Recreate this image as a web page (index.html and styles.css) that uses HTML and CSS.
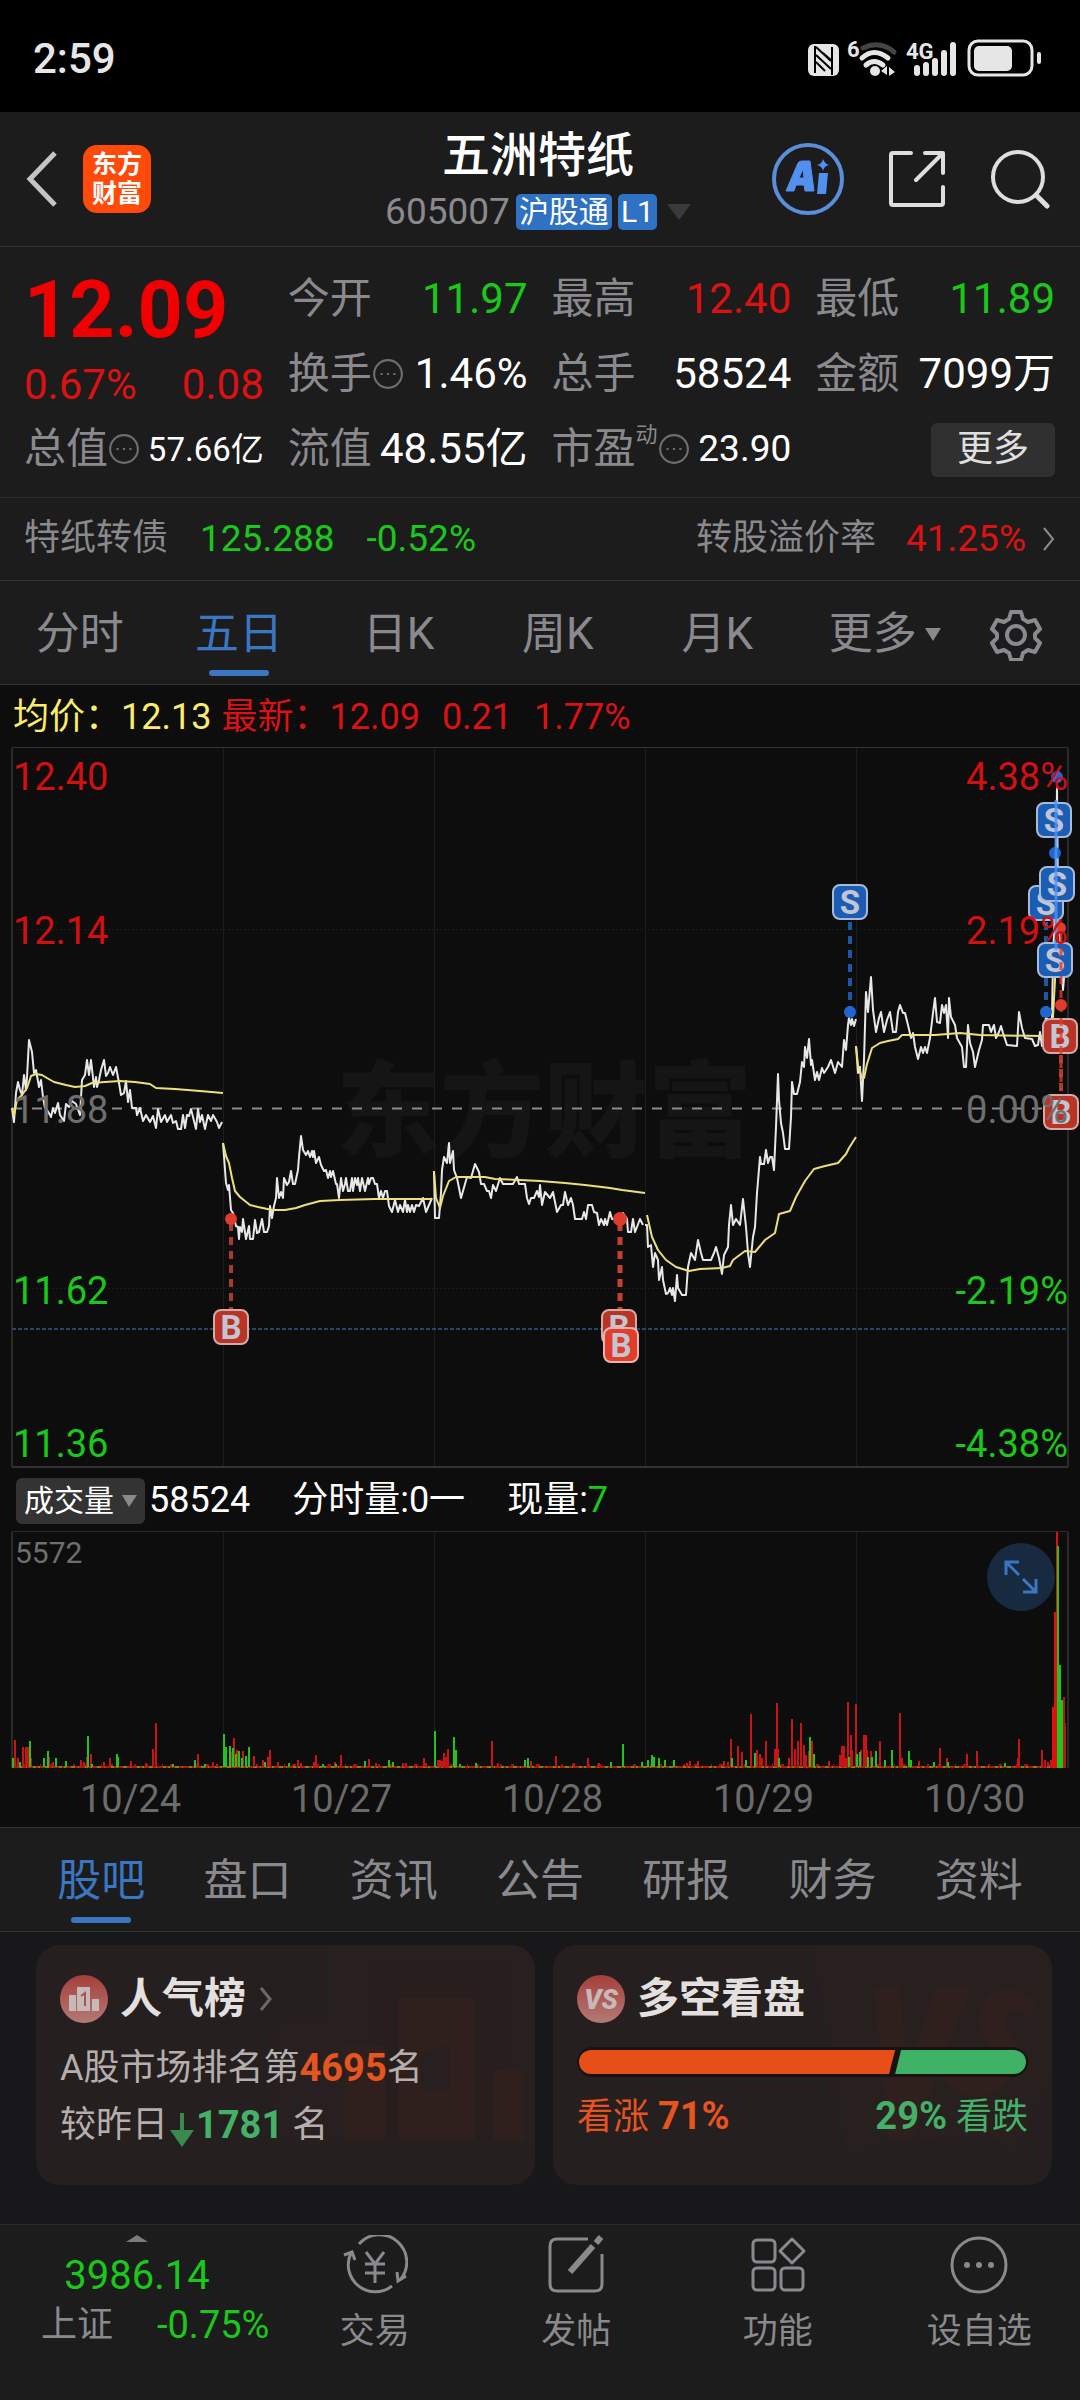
FILE: index.html
```html
<!DOCTYPE html>
<html lang="zh-CN">
<head>
<meta charset="utf-8">
<meta name="viewport" content="width=device-width, initial-scale=1">
<title>五洲特纸 605007</title>
<link rel="stylesheet" href="styles.css">
</head>
<body>
<div class="status">
  <span class="clock">2:59</span>
  <svg class="status-icons" width="240" height="46" viewBox="0 0 240 46" aria-hidden="true">
    <rect x="2" y="8" width="31" height="32" rx="6" fill="#e6e6e6"/>
    <path d="M9 10v27M26 11v28" stroke="#000" stroke-width="2"/>
    <path d="M10 11l15 14M10 19l15 14M17 17l9 8M10 26l9 9" stroke="#000" stroke-width="2"/>
    <text x="41" y="21" class="st-text">6</text>
    <path d="M57 12q17-8 31 4" fill="none" stroke="#444" stroke-width="5" stroke-linecap="round"/>
    <path d="M56 22q12-11 26 0M60 29q8-7 17 0" fill="none" stroke="#e6e6e6" stroke-width="5" stroke-linecap="round"/>
    <circle cx="69" cy="35" r="5" fill="#e6e6e6"/>
    <path d="M75 35l6-5v9zM89 36l-6-5v9z" fill="#e6e6e6"/>
    <text x="100" y="23" class="st-text">4G</text>
    <path d="M111 32v5M120 29v8M129 25v12M138 17v20M147 9v28" stroke="#e6e6e6" stroke-width="6" stroke-linecap="round"/>
    <rect x="163" y="5" width="63" height="34" rx="9" fill="none" stroke="#e6e6e6" stroke-width="3"/>
    <rect x="168" y="10" width="38" height="25" rx="5" fill="#e6e6e6"/>
    <path d="M233 18v8" stroke="#e6e6e6" stroke-width="4" stroke-linecap="round"/>
  </svg>
</div>

<header class="topbar">
  <div class="top-left">
    <button class="icon-btn" aria-label="返回"><svg width="32" height="58" viewBox="0 0 32 58"><path d="M29 3L4 29l25 26" fill="none" stroke="#c4c4c4" stroke-width="5"/></svg></button>
    <a class="logo" href="#">东方<br>财富</a>
  </div>
  <div class="top-mid">
    <h1>五洲特纸</h1>
    <div class="code"><span>605007</span><span class="tag">沪股通</span><span class="tag">L1</span><svg width="24" height="16" viewBox="0 0 24 16"><path d="M0 0h24L12 16z" fill="#3a3a3a"/></svg></div>
  </div>
  <div class="top-right">
    <button class="icon-btn" aria-label="AI"><svg width="72" height="72" viewBox="0 0 72 72"><circle cx="36" cy="36" r="34" fill="none" stroke="#5a8edb" stroke-width="4"/><path d="M14 48l12-28q1-2 4-2h8l4 30h-9l-1-6h-8l-2 6zM27 35h5l-1-9z" fill="#5290f0" stroke="#5290f0" stroke-width="1" stroke-linejoin="round"/><path d="M47 30h9l-2 21h-9z" fill="#5290f0"/><path d="M51 16q2 5 6 6-5 1-6 6-1-5-6-6 5-1 6-6z" fill="#5290f0"/></svg></button>
    <button class="icon-btn" aria-label="分享"><svg width="58" height="58" viewBox="0 0 58 58"><path d="M23 3H5Q3 3 3 5v48q0 2 2 2h48q2 0 2-2V37M37 3h18v20M54 4L28 30" fill="none" stroke="#dedede" stroke-width="4" stroke-linecap="round" stroke-linejoin="round"/></svg></button>
    <button class="icon-btn" aria-label="搜索"><svg width="60" height="60" viewBox="0 0 60 60"><circle cx="28" cy="28" r="25" fill="none" stroke="#dedede" stroke-width="4"/><path d="M46 46l11 11" stroke="#dedede" stroke-width="5" stroke-linecap="round"/></svg></button>
  </div>
</header>

<section class="quote">
  <div class="price">
    <strong>12.09</strong>
    <div class="pair red"><span>0.67%</span><span>0.08</span></div>
  </div>
  <div class="cell"><span class="lbl">今开</span><span class="val green">11.97</span></div>
  <div class="cell"><span class="lbl">最高</span><span class="val red">12.40</span></div>
  <div class="cell"><span class="lbl">最低</span><span class="val green">11.89</span></div>
  <div class="cell"><span class="lbl">换手<svg class="dots" viewBox="0 0 30 30"><circle cx="15" cy="15" r="13"/><path d="M8 15h2M14 15h2M20 15h2"/></svg></span><span class="val">1.46%</span></div>
  <div class="cell"><span class="lbl">总手</span><span class="val">58524</span></div>
  <div class="cell"><span class="lbl">金额</span><span class="val">7099万</span></div>
  <div class="cell"><span class="lbl">总值<svg class="dots" viewBox="0 0 30 30"><circle cx="15" cy="15" r="13"/><path d="M8 15h2M14 15h2M20 15h2"/></svg></span><span class="val xs">57.66亿</span></div>
  <div class="cell"><span class="lbl">流值</span><span class="val">48.55亿</span></div>
  <div class="cell"><span class="lbl">市盈<sup>动</sup><svg class="dots" viewBox="0 0 30 30"><circle cx="15" cy="15" r="13"/><path d="M8 15h2M14 15h2M20 15h2"/></svg></span><span class="val sm">23.90</span></div>
  <div class="cell end"><button class="more">更多</button></div>
</section>

<a class="bond" href="#">
  <span class="grey">特纸转债</span><span class="green b1">125.288</span><span class="green b2">-0.52%</span>
  <span class="grey push">转股溢价率</span><span class="red b3">41.25%</span>
  <svg width="14" height="26" viewBox="0 0 14 26"><path d="M2 2l9 11-9 11" fill="none" stroke="#8a8a8e" stroke-width="2"/></svg>
</a>

<nav class="periods">
  <button>分时</button><button class="on">五日</button><button>日K</button><button>周K</button><button>月K</button>
  <button class="drop">更多<svg width="16" height="13" viewBox="0 0 16 13"><path d="M0 0h16L8 13z" fill="#8a8a8e"/></svg></button>
  <button aria-label="设置"><svg width="52" height="52" viewBox="0 0 52 52" fill="none" stroke="#8a8a8e" stroke-width="4" stroke-linejoin="round"><path d="M21 3h10l2 7 5 3 7-2 5 9-5 5v4l5 5-5 9-7-2-5 3-2 7H21l-2-7-5-3-7 2-5-9 5-5v-4l-5-5 5-9 7 2 5-3z"/><circle cx="26" cy="26" r="9"/></svg></button>
</nav>

<main class="charts">
  <p class="legend"><span class="yellow">均价：</span><span class="yellow">12.13</span><span class="red l2">最新：</span><span class="red">12.09</span><span class="red l4">0.21</span><span class="red l4">1.77%</span></p>

  <svg class="plot" viewBox="0 747 1080 721" role="img" aria-label="五日分时走势">
    <defs>
      <g id="buy"><rect x="-17" y="-17" width="34" height="34" rx="7" fill="#b83426" stroke="#d3aaa6" stroke-width="2"/><text y="12" class="mark">B</text></g>
      <g id="sell"><rect x="-17" y="-17" width="34" height="34" rx="7" fill="#1b5cb5" stroke="#a9bbd6" stroke-width="2"/><text y="12" class="mark">S</text></g>
    </defs>
    <text x="336" y="1149" class="brand">东方财富</text>
    <g fill="none" stroke="#1d1d1d" stroke-width="1"><path d="M223.500 748V1467M434.500 748V1467M645.500 748V1467M856.500 748V1467"/><path d="M12 929.500H1068M12 1288.500H1068" stroke-dasharray="2 2"/></g>
    <path d="M12 1467V748M1068 748V1467" stroke="#2a2a2a" stroke-width="2"/>
    <path d="M12 747.500H1068" stroke="#333"/>
    <path d="M12 1467H1068" stroke="#333" stroke-width="2"/>
    <path d="M12 1108.500H1068" stroke="#8c8c8c" stroke-width="2" stroke-dasharray="10 10"/>
    <path d="M12 1329H1068" stroke="#2a4562" stroke-width="2" stroke-dasharray="4 2"/>
    <g fill="none" stroke="#e8e8e8" stroke-width="2" stroke-linejoin="round">
      <path d="M12 1108L14 1122 16 1093 18 1082 20 1090 22 1095 24 1075 26 1090 27 1077 29 1040 32 1052 34 1073 36 1070 39 1087 41 1080 43 1097 45 1108 47 1110 50 1115 51 1117 53 1108 55 1113 58 1103 60 1115 64 1121 66 1104 69 1107 72 1101 76 1104 80 1115 82 1080 85 1075 87 1060 89 1075 91 1060 94 1087 96 1077 97 1087 99 1080 101 1070 104 1060 106 1076 108 1073 110 1067 113 1075 116 1067 119 1083 121 1095 124 1093 126 1081 128 1102 130 1090 132 1108 136 1108 137 1115 140 1108 143 1121 146 1115 150 1122 153 1116 156 1128 158 1109 161 1122 165 1115 167 1122 171 1115 173 1123 176 1121 178 1129 181 1129 183 1115 185 1128 187 1115 189 1116 191 1109 194 1121 196 1129 198 1109 200 1122 202 1115 205 1129 208 1115 211 1121 213 1115 217 1122 219 1128 222 1122"/>
      <path d="M223 1143L225 1170 226 1183 228 1190 229 1185 231 1210 233 1213 236 1226 238 1227 239 1239 240 1227 242 1232 243 1219 246 1239 247 1235 249 1226 250 1239 253 1239 255 1220 257 1233 259 1232 262 1219 264 1232 267 1232 269 1226 270 1206 272 1218 274 1206 276 1198 277 1178 279 1198 281 1192 283 1198 284 1178 287 1185 289 1182 291 1171 293 1184 295 1184 298 1170 299 1157 301 1136 303 1150 306 1155 308 1151 310 1157 312 1151 313 1157 314 1151 316 1163 319 1157 321 1165 324 1171 326 1170 328 1178 330 1171 331 1177 333 1171 336 1184 337 1184 339 1198 341 1178 343 1191 345 1184 346 1178 348 1191 350 1191 352 1178 353 1191 355 1178 357 1185 358 1178 360 1191 362 1178 365 1191 368 1178 369 1184 371 1178 373 1178 375 1184 377 1184 379 1198 381 1191 383 1198 385 1191 387 1191 389 1206 392 1212 395 1200 398 1212 400 1205 403 1212 405 1200 407 1212 408 1205 410 1212 412 1205 414 1212 416 1205 419 1206 423 1198 426 1212 429 1205 432 1198"/>
      <path d="M434 1171L435 1218 439 1218 441 1193 442 1170 444 1157 447 1163 449 1143 450 1163 453 1151 454 1170 457 1178 461 1198 463 1191 467 1177 471 1178 475 1164 479 1172 481 1184 484 1184 487 1191 489 1191 491 1198 493 1185 496 1191 500 1178 503 1184 513 1184 517 1177 519 1184 525 1184 527 1198 529 1204 531 1198 534 1198 537 1191 539 1197 540 1185 542 1205 545 1192 550 1198 553 1192 557 1212 561 1205 563 1205 565 1192 568 1205 571 1198 573 1205 575 1219 582 1219 584 1212 586 1219 588 1205 592 1205 594 1212 597 1213 599 1225 601 1219 604 1225 605 1219 607 1225 610 1212 612 1219 620 1219 623 1213 627 1219 628 1232 631 1232 633 1219 635 1232 637 1227 640 1219 643 1225"/>
      <path d="M645 1225L647 1225 648 1247 651 1245 653 1267 655 1253 658 1260 659 1280 662 1267 663 1280 666 1294 668 1293 670 1288 672 1295 673 1288 675 1301 677 1275 678 1288 682 1295 686 1295 688 1267 691 1253 695 1260 698 1240 701 1253 703 1260 711 1260 714 1253 716 1247 719 1258 722 1274 724 1255 728 1247 729 1225 731 1205 733 1225 736 1219 740 1225 743 1199 746 1227 748 1253 750 1267 753 1237 755 1227 757 1193 760 1157 761 1164 764 1164 766 1150 768 1163 770 1157 772 1157 774 1170 776 1127 778 1074 779 1100 781 1123 783 1133 785 1149 789 1149 791 1117 792 1082 794 1094 797 1094 800 1082 802 1062 804 1067 805 1047 807 1058 809 1039 811 1065 812 1060 815 1080 817 1072 819 1080 822 1068 824 1073 828 1067 831 1060 835 1073 838 1062 842 1067 844 1040 846 1050 848 1025 849 1018 851 1025 852 1019 854 1026 856 1019"/>
      <path d="M856 1046L858 1073 860 1067 862 1101 864 1060 866 992 868 1012 871 977 873 1010 876 1032 879 1018 881 1012 884 1032 887 1020 890 1012 893 1032 896 1032 898 1012 900 1005 903 1013 905 1013 908 1025 911 1038 913 1033 915 1047 918 1059 921 1047 923 1053 925 1047 927 1053 930 1038 933 1013 935 998 937 1022 940 1023 942 1005 944 1013 946 1005 948 1038 949 998 951 1017 955 1025 957 1038 962 1047 964 1067 966 1067 968 1025 970 1043 973 1052 975 1067 979 1050 982 1040 983 1025 989 1025 991 1032 994 1025 996 1038 999 1032 1001 1026 1003 1033 1007 1045 1017 1046 1019 1012 1022 1028 1025 1038 1032 1039 1035 1046 1038 1045 1040 1032 1042 1046 1046 1017 1050 1025 1052 1017 1053 960 1056 880 1057 787 1058 907 1063 990 1065 967"/>
    </g>
    <g fill="none" stroke="#ede07a" stroke-width="2" stroke-linejoin="round">
      <path d="M12 1108L14 1115 17 1100 22 1095 27 1088 31 1076 36 1074 42 1075 47 1078 54 1082 66 1085 75 1087 85 1086 92 1083 105 1082 120 1081 135 1082 150 1084 156 1088 175 1089 200 1091 223 1093"/>
      <path d="M223 1143L226 1156 229 1163 232 1178 235 1191 240 1197 250 1205 258 1207 272 1210 285 1210 296 1208 305 1205 320 1201 340 1200 375 1199 432 1199"/>
      <path d="M434 1171L436 1198 440 1208 443 1196 449 1181 456 1177 485 1177 495 1179 520 1180 540 1181 565 1183 585 1185 610 1188 622 1190 645 1193"/>
      <path d="M647 1215L652 1237 658 1250 666 1260 676 1267 689 1271 700 1269 722 1268 730 1266 733 1260 745 1251 755 1252 765 1240 775 1233 779 1214 790 1211 796 1197 805 1181 814 1169 825 1166 838 1163 846 1154 849 1148 856 1137"/>
      <path d="M856 1046L858 1065 862 1078 864 1078 867 1064 872 1048 880 1043 888 1041 898 1039 902 1035 935 1035 960 1033 980 1035 1040 1036 1052 1035 1055 980 1057 920"/>
    </g>
    <g fill="none" stroke-dasharray="8 6">
      <path d="M231 1223V1309" stroke="#a83a2e" stroke-width="4"/>
      <path d="M620 1223V1309" stroke="#c8402f" stroke-width="5"/>
      <path d="M850 922V1008M1046 922V1008" stroke="#1f57a5" stroke-width="4"/>
      <path d="M1061 1055V1094" stroke="#a83a2e" stroke-width="4"/>
    </g>
    <g fill="#df3b2a"><circle cx="231" cy="1219" r="6"/><circle cx="620" cy="1219" r="7"/><circle cx="1060" cy="928" r="6"/><circle cx="1061" cy="1005" r="6"/></g>
    <g fill="#1f66d0"><circle cx="850" cy="1012" r="6"/><circle cx="1046" cy="1012" r="6"/><circle cx="1057" cy="777" r="6"/><circle cx="1055" cy="853" r="6"/></g>
    <use href="#buy" x="231" y="1327"/><use href="#buy" x="619" y="1327"/>
    <g><rect x="604" y="1328" width="34" height="34" rx="7" fill="#e23d2b" stroke="#e9b7b0" stroke-width="2"/><text x="621" y="1357" class="mark">B</text></g>
    <use href="#sell" x="850" y="902"/><use href="#sell" x="1046" y="903"/><use href="#sell" x="1054" y="820"/><use href="#sell" x="1057" y="884"/><use href="#sell" x="1055" y="960"/>
    <use href="#buy" x="1060" y="1036"/><use href="#buy" x="1061" y="1112"/>
    <path d="M1056 800V950" stroke="#4c94ff" stroke-width="3" opacity=".8"/>
    <path d="M1061 934V1090" stroke="#df3b2a" stroke-width="3" stroke-dasharray="8 6" opacity=".8"/>
    <g class="axis">
      <g fill="#d40f0f"><text x="13" y="790">12.40</text><text x="13" y="944">12.14</text><text x="1068" y="790" class="r">4.38%</text><text x="1068" y="944" class="r">2.19%</text></g>
      <g fill="#6e6e6e"><text x="13" y="1123">11.88</text><text x="1068" y="1123" class="r">0.00%</text></g>
      <g fill="#1ac81a"><text x="13" y="1304">11.62</text><text x="13" y="1457">11.36</text><text x="1068" y="1304" class="r">-2.19%</text><text x="1068" y="1457" class="r">-4.38%</text></g>
    </g>
  </svg>

  <div class="vol-head">
    <button class="chip">成交量<svg width="15" height="12" viewBox="0 0 15 12"><path d="M0 0h15L7 12z" fill="#8a8a8e"/></svg></button>
    <span>58524</span><span class="v1">分时量:0一</span><span class="v1">现量:<i class="green">7</i></span>
  </div>

  <div class="vol-box">
    <svg class="plot" viewBox="0 1531 1080 239" role="img" aria-label="成交量">
      <path d="M223.500 1532V1768M434.500 1532V1768M645.500 1532V1768M856.500 1532V1768" stroke="#1d1d1d"/>
      <path d="M12 1768V1532M1068 1532V1768" stroke="#2a2a2a" stroke-width="2"/>
      <path d="M12 1531.500H1068" stroke="#2c2c2c"/>
      <text x="15" y="1563" class="max">5572</text>
      <path d="M12 1767H1066" stroke="#c01010" stroke-width="2"/>
      <path d="M12 1767H1052" stroke="#5f8f10" stroke-width="2" stroke-dasharray="2 5 4 3 1 6 3 2"/>
      <path d="M12 1765H1052" stroke="#a81010" stroke-width="2" stroke-dasharray="2 9 3 14 1 7 4 21"/>
      <path fill="none" stroke="#c81414" stroke-width="2" d="M15 1767V1740M18 1767V1758M23 1767V1747M26 1767V1747M28 1767V1747M31 1767V1758M49 1767V1757M53 1767V1762M66 1767V1762M81 1767V1760M84 1767V1762M87 1767V1757M91 1767V1754M104 1767V1762M110 1767V1758M131 1767V1761M146 1767V1763M153 1767V1749M156 1767V1723M198 1767V1754M213 1767V1762M217 1767V1764M231 1767V1752M234 1767V1738M237 1767V1750M243 1767V1751M254 1767V1756M263 1767V1760M268 1767V1757M270 1767V1750M278 1767V1762M298 1767V1760M301 1767V1763M314 1767V1762M316 1767V1755M335 1767V1762M341 1767V1755M369 1767V1759M376 1767V1763M403 1767V1763M406 1767V1763M424 1767V1758M426 1767V1763M438 1767V1760M440 1767V1760M442 1767V1761M444 1767V1753M446 1767V1757M448 1767V1749M492 1767V1741M498 1767V1763M531 1767V1761M556 1767V1756M574 1767V1763M588 1767V1758M599 1767V1763M687 1767V1763M690 1767V1761M698 1767V1761M724 1767V1761M728 1767V1762M731 1767V1739M738 1767V1746M742 1767V1752M751 1767V1714M757 1767V1750M760 1767V1754M762 1767V1758M766 1767V1741M775 1767V1749M777 1767V1703M778 1767V1749M789 1767V1758M792 1767V1719M795 1767V1749M798 1767V1741M801 1767V1723M804 1767V1745M806 1767V1755M809 1767V1751M812 1767V1741M829 1767V1761M840 1767V1755M842 1767V1746M844 1767V1746M846 1767V1758M848 1767V1702M851 1767V1735M852 1767V1750M856 1767V1704M861 1767V1750M864 1767V1735M866 1767V1735M867 1767V1750M871 1767V1751M880 1767V1741M900 1767V1713M902 1767V1758M919 1767V1761M940 1767V1748M947 1767V1758M967 1767V1754M977 1767V1751M1018 1767V1758M1019 1767V1739M1042 1767V1750M1045 1767V1760M1048 1767V1762M1051 1767V1760"/>
      <path fill="none" stroke="#1fc41f" stroke-width="2" d="M13 1767V1758M20 1767V1762M30 1767V1741M44 1767V1758M48 1767V1751M56 1767V1758M66 1767V1761M88 1767V1736M92 1767V1764M117 1767V1754M118 1767V1757M173 1767V1764M195 1767V1760M205 1767V1764M224 1767V1734M226 1767V1747M230 1767V1746M233 1767V1748M236 1767V1754M239 1767V1751M242 1767V1758M246 1767V1756M249 1767V1747M265 1767V1762M289 1767V1763M323 1767V1764M336 1767V1764M365 1767V1761M389 1767V1760M393 1767V1762M435 1767V1731M454 1767V1737M456 1767V1750M460 1767V1764M476 1767V1763M525 1767V1760M528 1767V1758M611 1767V1762M623 1767V1744M642 1767V1762M648 1767V1760M652 1767V1755M654 1767V1757M659 1767V1758M665 1767V1760M674 1767V1760M732 1767V1758M746 1767V1760M755 1767V1753M779 1767V1758M810 1767V1737M814 1767V1754M849 1767V1757M857 1767V1754M860 1767V1752M868 1767V1757M872 1767V1757M876 1767V1751M885 1767V1760M892 1767V1750M909 1767V1751M911 1767V1760M934 1767V1762M948 1767V1762M1005 1767V1763"/>
      <path d="M1052 1768V1707H1054V1612H1056V1532H1058V1768z" fill="#e01010"/>
      <path d="M1057 1768V1546H1059V1665H1061V1700H1063V1768z" fill="#1fc41f"/>
      <path d="M1063 1768V1697H1065V1723H1066V1768z" fill="#b01c10"/>
    </svg>
    <button class="expand" aria-label="放大"><svg width="34" height="34" viewBox="0 0 34 34" fill="none" stroke="#3a76c2" stroke-width="3"><path d="M2 15V2h13M3 3l12 12M32 19v13H19M31 31L19 19"/></svg></button>
  </div>
  <div class="dates"><span>10/24</span><span>10/27</span><span>10/28</span><span>10/29</span><span>10/30</span></div>
</main>

<nav class="sections">
  <button class="on">股吧</button><button>盘口</button><button>资讯</button><button>公告</button><button>研报</button><button>财务</button><button>资料</button>
</nav>

<section class="feed">
  <article class="card">
    <svg class="wm" viewBox="0 0 260 240" preserveAspectRatio="xMaxYMid slice" aria-hidden="true"><path d="M0 196V75h54V0h206v196z" fill="#282020"/><path d="M97 196V18h136v178z" fill="#271e1d"/><path d="M124 53h76v143h-76zM70 101h40v95H70zM218 125h30v71h-30z" fill="#2f201e"/><path d="M145 110l30-12v48h-30z" fill="#282020"/></svg>
    <h2><svg width="48" height="48" viewBox="0 0 48 48"><defs><linearGradient id="disc" x1="0" y1="0" x2="0" y2="1"><stop offset="0" stop-color="#a53f3b"/><stop offset="1" stop-color="#b37a76"/></linearGradient></defs><circle cx="24" cy="24" r="24" fill="url(#disc)"/><path d="M9 20h7v16H9zM17 12h13v24H17zM32 24h7v12h-7z" fill="#c6b9b8"/><path d="M21 21l4-3v13" fill="none" stroke="#a8544f" stroke-width="2"/></svg>人气榜<svg class="chev" width="16" height="26" viewBox="0 0 16 26"><path d="M3 2l9 11-9 11" fill="none" stroke="#6e6866" stroke-width="3"/></svg></h2>
    <p>A股市场排名第<b class="orange">4695</b>名</p>
    <p>较昨日<svg class="down" width="24" height="34" viewBox="0 0 24 34"><path d="M10 0h4v17h10L12 34 0 17h10z" fill="#3a8a4e"/></svg><b class="mint">1781</b> 名</p>
  </article>
  <article class="card">
    <svg class="wm" viewBox="0 0 260 240" preserveAspectRatio="xMaxYMid slice" aria-hidden="true"><path d="M20 0h240v130L215 223l-8-28-118 2-35 16z" fill="#281f1f"/><path d="M82 42h26l8 85 28-85h36l-60 150H96z" fill="#2f201e"/><path d="M246 60q-20-26-46-12-26 22-4 50 14 16-8 26-14 2-24-12l-14 22q26 26 56 12 34-26 12-58-12-14 4-22 8-2 12 10z" fill="#2f201e"/></svg>
    <h2><svg width="48" height="48" viewBox="0 0 48 48"><circle cx="24" cy="24" r="24" fill="url(#disc)"/><text x="24" y="34" class="vs">VS</text></svg>多空看盘</h2>
    <svg class="ratio" viewBox="0 0 448 30" preserveAspectRatio="none" aria-hidden="true"><rect width="448" height="30" rx="15" fill="#191414"/><path d="M14 3h302l-6 24H14a12 12 0 0 1 0-24z" fill="#e74e18"/><path d="M322 3h112a12 12 0 0 1 0 24H316z" fill="#40b266"/></svg>
    <p class="sides"><span class="orange">看涨 <b>71%</b></span><span class="mint"><b>29%</b> 看跌</span></p>
  </article>
</section>

<footer class="dock">
  <a class="index" href="#"><svg width="22" height="7" viewBox="0 0 22 7"><path d="M11 0l11 7H0z" fill="#7c7c80"/></svg><span class="pts green">3986.14</span><span class="idx"><span>上证</span><span class="green">-0.75%</span></span></a>
  <a href="#"><svg width="66" height="60" viewBox="0 0 66 60" fill="none" stroke="#8a8a8e" stroke-width="3"><path d="M17 9a27 27 0 0 1 41 36M50 51A27 27 0 0 1 9 18M2 20l8-3 3 8M64 41l-8 5-1-9M24 17l9 12 9-12M33 29v19M23 29h20M23 38h20"/></svg>交易</a>
  <a href="#"><svg width="60" height="60" viewBox="0 0 60 60" fill="none" stroke="#8a8a8e" stroke-width="3"><path d="M42 4H11Q4 4 4 11v38q0 7 7 7h38q7 0 7-7V19"/><path d="M24 37L47 11M50 8l5-6" stroke-width="6"/></svg>发帖</a>
  <a href="#"><svg width="56" height="60" viewBox="0 0 56 60" fill="none" stroke="#8a8a8e" stroke-width="3" stroke-linejoin="round"><rect x="3" y="5" width="22" height="22" rx="4"/><rect x="3" y="33" width="22" height="22" rx="4"/><rect x="31" y="33" width="22" height="22" rx="4"/><path d="M42 4l12 12-12 12-12-12z"/></svg>功能</a>
  <a href="#"><svg width="60" height="60" viewBox="0 0 60 60" fill="none" stroke="#8a8a8e" stroke-width="3"><circle cx="30" cy="30" r="27"/><path d="M18 30h0M30 30h0M42 30h0" stroke-width="6" stroke-linecap="round"/></svg>设自选</a>
</footer>
</body>
</html>
```

FILE: styles.css
```css
* { box-sizing: border-box; }

body {
  margin: 0;
  min-height: 100vh;
  display: flex;
  flex-direction: column;
  background: #18181a;
  color: #fff;
  font-family: Roboto, "Noto Sans CJK SC", sans-serif;
  font-size: 36px;
  line-height: 1.2;
}

h1, h2, p { margin: 0; font-weight: 400; }
svg { display: block; flex: none; }
i { font-style: normal; }
a { color: inherit; text-decoration: none; }
button {
  margin: 0;
  padding: 0;
  border: 0;
  background: none;
  color: inherit;
  font: inherit;
}

.red { color: #dc1212; }
.green { color: #1ac81a; }
.yellow { color: #fbec6c; }
.grey { color: #8a8a8e; }
.orange { color: #e65420; }
.mint { color: #45b067; }

/* status bar */
.status {
  height: 112px;
  padding: 6px 34px 0 33px;
  display: flex;
  align-items: center;
  justify-content: space-between;
  background: #000;
}
.clock { font-size: 42px; font-weight: 500; color: #e6e6e6; }
.st-text { font-size: 22px; font-weight: 700; fill: #e6e6e6; }

/* title bar */
.topbar {
  height: 135px;
  padding: 0 30px 0 26px;
  display: grid;
  grid-template-columns: 1fr auto 1fr;
  align-items: center;
  background: #1c1c1c;
  border-bottom: 1px solid #333;
}
.top-left, .top-right { display: flex; align-items: center; }
.top-left { gap: 25px; }
.top-right { gap: 44px; justify-content: flex-end; }
.icon-btn { display: block; }
.logo {
  width: 68px;
  height: 68px;
  display: flex;
  align-items: center;
  justify-content: center;
  border-radius: 14px;
  background: #ff4a0a;
  font-size: 25px;
  line-height: 29px;
  font-weight: 700;
}
.top-mid { display: flex; flex-direction: column; align-items: center; gap: 2px; }
h1 { font-size: 48px; line-height: 64px; font-weight: 500; }
.code { display: flex; align-items: center; gap: 6px; color: #8a8a8e; font-size: 37px; line-height: 44px; }
.code svg { margin-left: 4px; }
.tag {
  padding: 0 3px;
  border-radius: 5px;
  background: #2f72c4;
  color: #fff;
  font-size: 30px;
  line-height: 36px;
}

/* quote figures */
.quote {
  padding: 15px 25px 10px 24px;
  display: grid;
  grid-template-columns: repeat(4, 1fr);
  grid-auto-rows: 75px;
  column-gap: 24px;
  background: #1c1c1c;
}
.price { grid-row: span 2; display: flex; flex-direction: column; justify-content: space-between; padding: 2px 0; }
.price strong { font-size: 79px; line-height: 92px; font-weight: 700; color: #f00000; }
.pair { display: flex; justify-content: space-between; font-size: 42px; line-height: 50px; }
.cell { display: flex; align-items: center; justify-content: space-between; white-space: nowrap; }
.end { justify-content: flex-end; }
.lbl { display: flex; align-items: center; color: #8a8a8e; font-size: 42px; }
.lbl sup { align-self: flex-start; font-size: 22px; line-height: 22px; }
.val { font-size: 42px; }
.val.sm { font-size: 37px; }
.val.xs { font-size: 33px; }
.dots { width: 32px; height: 32px; fill: none; stroke: #6e6e72; stroke-width: 2; }
.more {
  width: 124px;
  height: 54px;
  border-radius: 6px;
  background: #303030;
  color: #e0e0e0;
  font-size: 36px;
}

/* convertible bond strip */
.bond {
  height: 84px;
  padding: 0 24px 0 24px;
  display: flex;
  align-items: center;
  background: #1c1c1c;
  border-top: 1px solid #2a2a2a;
  border-bottom: 1px solid #333;
}
.b1, .b2 { margin-left: 32px; font-size: 37px; }
.b3 { margin: 0 16px 0 30px; font-size: 37px; }
.push { margin-left: auto; }

/* tab rows */
.periods, .sections {
  height: 104px;
  display: grid;
  background: #1c1c1c;
  border-bottom: 1px solid #333;
  color: #8a8a8e;
  font-size: 44px;
}
.periods { grid-template-columns: repeat(6, 4fr) 3fr; padding-right: 4px; }
.sections { grid-template-columns: repeat(7, 1fr); padding: 0 28px; border-top: 1px solid #333; height: 105px; }
.periods button, .sections button {
  display: flex;
  align-items: center;
  justify-content: center;
  position: relative;
  padding-top: 4px;
  white-space: nowrap;
}
.periods .drop { gap: 8px; padding-left: 16px; }
.on { color: #3a76c2; }
.on::after {
  content: "";
  position: absolute;
  left: calc(50% - 30px);
  bottom: 8px;
  width: 60px;
  height: 6px;
  border-radius: 3px;
  background: #3a76c2;
}

/* charts */
.charts { background: #0d0d0d; }
.legend { height: 62px; padding: 3px 0 0 13px; display: flex; align-items: center; white-space: nowrap; }
.l2 { margin-left: 10px; }
.l4 { margin-left: 22px; }
.plot { width: 100%; height: auto; }
.axis { font-size: 38px; }
.r { text-anchor: end; }
.mark { font-size: 33px; font-weight: 700; text-anchor: middle; fill: #c3c6d2; }
.brand { font-size: 104px; font-weight: 900; fill: #151515; }
.max { font-size: 30px; fill: #6e6e6e; }
.vol-head { height: 63px; padding: 3px 0 0 16px; display: flex; align-items: center; white-space: nowrap; }
.chip {
  height: 46px;
  margin-right: 4px;
  padding: 0 8px;
  display: flex;
  align-items: center;
  gap: 8px;
  border-radius: 6px;
  background: #333;
  font-size: 30px;
}
.v1 { margin-left: 42px; }
.vol-box { position: relative; }
.expand {
  position: absolute;
  top: 12px;
  right: 25px;
  width: 68px;
  height: 68px;
  display: flex;
  align-items: center;
  justify-content: center;
  border-radius: 50%;
  background: #182a40;
}
.dates {
  height: 57px;
  padding: 3px 0 0 25px;
  display: grid;
  grid-template-columns: repeat(5, 1fr);
  align-items: center;
  text-align: center;
  color: #6b6b6b;
  font-size: 38px;
}

/* community cards */
.feed {
  flex: 1;
  padding: 13px 28px 37px 36px;
  display: grid;
  grid-template-columns: 1fr 1fr;
  align-items: start;
  gap: 18px;
}
.card {
  position: relative;
  height: 240px;
  padding: 24px;
  overflow: hidden;
  border-radius: 24px;
  background: #251f1f;
  color: #b4afad;
}
.card > * { position: relative; }
.card .wm { position: absolute; top: 0; right: 0; width: 260px; height: 240px; }
.card h2 { display: flex; align-items: center; gap: 12px; height: 60px; color: #e4e0df; font-size: 42px; font-weight: 700; }
.card p { display: flex; align-items: center; height: 57px; white-space: pre; }
.card h2 + p { margin-top: 11px; }
.card b { font-size: 38px; }
.down { margin: 8px 2px 0; }
.vs { font-size: 27px; font-weight: 900; font-style: italic; text-anchor: middle; fill: #c6b9b8; }
.ratio { width: 100%; height: 30px; margin-top: 18px; }
.card .sides { justify-content: space-between; margin-top: 11px; }

/* bottom dock */
.dock {
  height: 176px;
  display: grid;
  grid-template-columns: 274px repeat(4, 1fr);
  background: #1c1c1c;
  border-top: 1px solid #2a2a2a;
  color: #8a8a8e;
}
.dock a { display: flex; flex-direction: column; align-items: center; padding-top: 10px; font-size: 35px; }
.dock a > svg { margin-bottom: 16px; }
.dock .index { font-size: 36px; }
.dock .index > svg { margin-bottom: 9px; }
.dock .index .pts { font-size: 40px; line-height: 50px; }
.idx { width: 100%; padding-left: 41px; display: flex; gap: 44px; white-space: nowrap; line-height: 48px; }
.idx .green { font-size: 38px; }
```
